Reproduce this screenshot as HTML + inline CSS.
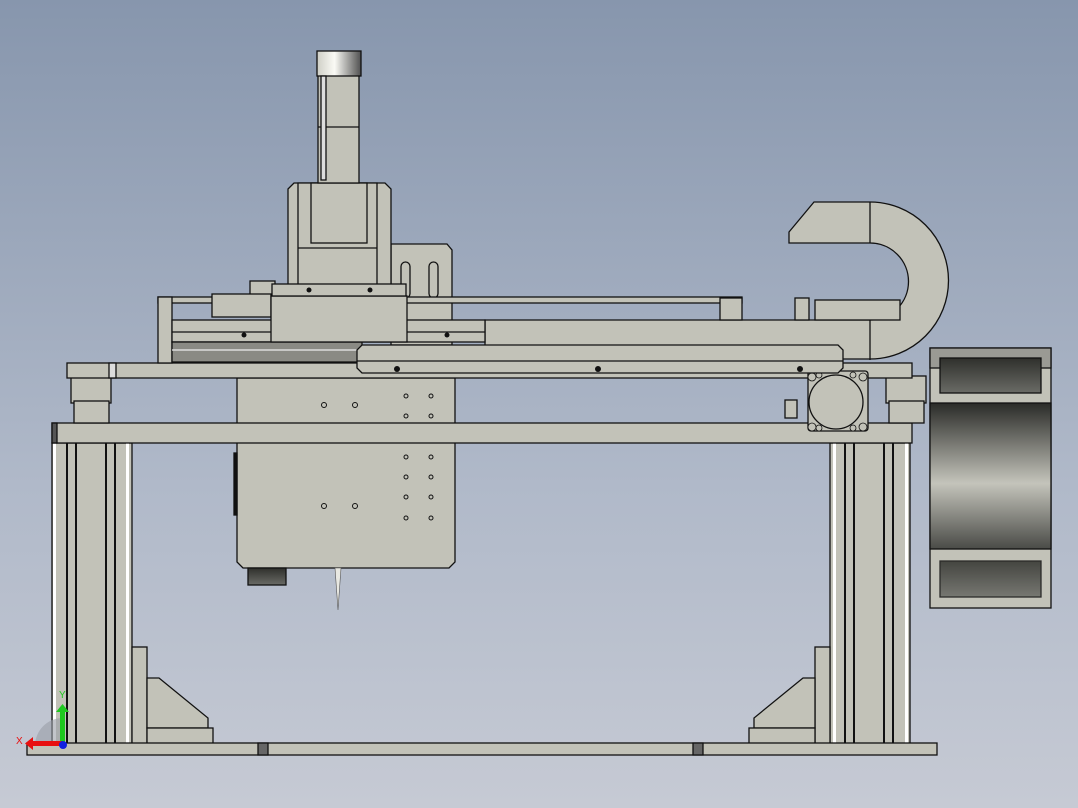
<!DOCTYPE html>
<html><head><style>
html,body{margin:0;padding:0;width:1078px;height:808px;overflow:hidden}
body{background:linear-gradient(#8796ad,#b0b9c9 60%,#c6cad4)}
svg{position:absolute;left:0;top:0}
</style></head><body>
<svg width="1078" height="808" viewBox="0 0 1078 808" xmlns="http://www.w3.org/2000/svg" font-family="Liberation Sans, sans-serif">
<defs>
<linearGradient id="dk" x1="0" y1="0" x2="0" y2="1"><stop offset="0" stop-color="#2f302c"/><stop offset="1" stop-color="#6a6b66"/></linearGradient>
<linearGradient id="mot" x1="0" y1="0" x2="0" y2="1"><stop offset="0" stop-color="#2a2b28"/><stop offset="0.55" stop-color="#c4c4bb"/><stop offset="1" stop-color="#4a4b47"/></linearGradient>
<linearGradient id="cap" x1="0" y1="0" x2="1" y2="0"><stop offset="0" stop-color="#cfcfc6"/><stop offset="0.4" stop-color="#fafaf5"/><stop offset="1" stop-color="#505050"/></linearGradient>
</defs>
<g fill="#c2c2b8" stroke="#111" stroke-width="1.3">
<rect x="52" y="443" width="80" height="302"/>
<rect x="830" y="443" width="80" height="302"/>
<g stroke-width="2">
<line x1="67" y1="443" x2="67" y2="745"/><line x1="76" y1="443" x2="76" y2="745"/><line x1="106" y1="443" x2="106" y2="745"/><line x1="115" y1="443" x2="115" y2="745"/>
<line x1="845" y1="443" x2="845" y2="745"/><line x1="854" y1="443" x2="854" y2="745"/><line x1="884" y1="443" x2="884" y2="745"/><line x1="893" y1="443" x2="893" y2="745"/>
</g>
<rect x="53" y="443" width="3" height="302" fill="#fff" stroke="none"/>
<rect x="126" y="443" width="3" height="302" fill="#fff" stroke="none"/>
<rect x="833" y="443" width="3" height="302" fill="#fff" stroke="none"/>
<rect x="905" y="443" width="3" height="302" fill="#fff" stroke="none"/>
<rect x="132" y="647" width="15" height="98"/>
<path d="M147 678 H159 L208 718 V728 H147 Z"/>
<rect x="147" y="728" width="66" height="17"/>
<rect x="815" y="647" width="15" height="98"/>
<path d="M815 678 H803 L754 718 V728 H815 Z"/>
<rect x="749" y="728" width="66" height="17"/>
<rect x="27" y="743" width="910" height="12"/>
<rect x="258" y="743" width="10" height="12" fill="#666"/>
<rect x="693" y="743" width="10" height="12" fill="#666"/>
<path d="M237 378 H455 V562 L449 568 H243 L237 562 Z"/>
<rect x="234" y="453" width="3" height="62" fill="#111"/>
<rect x="248" y="568" width="38" height="17" fill="url(#dk)"/>
<path d="M335 568 L338 610 L341 568 Z" fill="#e8e8e2" stroke="#555" stroke-width="0.6"/>
<rect x="52" y="423" width="860" height="20"/>
<rect x="52" y="423" width="5" height="20" fill="#555"/>
<rect x="71" y="376" width="40" height="27"/><rect x="74" y="401" width="35" height="22"/>
<rect x="886" y="376" width="40" height="27"/><rect x="889" y="401" width="35" height="22"/>
<rect x="67" y="363" width="845" height="15"/>
<rect x="109" y="363" width="7" height="15" fill="#ddd"/>
<rect x="930" y="348" width="121" height="260" fill="#c2c2b8"/>
<rect x="930" y="348" width="121" height="20" fill="#9a9a94"/>
<rect x="940" y="358" width="101" height="35" fill="url(#dk)"/>
<rect x="930" y="403" width="121" height="146" fill="url(#mot)"/>
<rect x="940" y="561" width="101" height="36" fill="url(#dk)" opacity="0.85"/>
<rect x="808" y="371" width="60" height="60" rx="3"/>
<circle cx="836" cy="402" r="27"/>
<g stroke-width="0.8"><circle cx="812" cy="377" r="4"/><circle cx="863" cy="377" r="4"/><circle cx="812" cy="427" r="4"/><circle cx="863" cy="427" r="4"/><circle cx="819" cy="375" r="3"/><circle cx="853" cy="375" r="3"/><circle cx="853" cy="428" r="3"/><circle cx="819" cy="428" r="3"/></g>
<rect x="785" y="400" width="12" height="18"/>
<path d="M789 232 L814 202 H870 A78 78 0 0 1 870 359 H485 V320 H870 A38 38 0 0 0 870 243 H789 Z"/>
<line x1="870" y1="202" x2="870" y2="243"/><line x1="870" y1="319" x2="870" y2="360"/>
<rect x="815" y="300" width="85" height="20"/>
<rect x="795" y="298" width="14" height="22"/>
<path d="M391 244 H447 L452 250 V345 H391 Z"/>
<rect x="401" y="262" width="9" height="36" rx="4.5"/>
<rect x="429" y="262" width="9" height="36" rx="4.5"/>
<rect x="250" y="281" width="25" height="15"/>
<path d="M288 189 L294 183 H385 L391 189 V296 H288 Z"/>
<path d="M298 183 H377 V290 L372 296 H303 L298 290 Z"/>
<rect x="311" y="183" width="56" height="60"/>
<line x1="298" y1="248" x2="377" y2="248"/>
<rect x="318" y="72" width="41" height="111"/>
<rect x="317" y="51" width="44" height="25" fill="url(#cap)"/>
<line x1="318" y1="127" x2="359" y2="127"/>
<rect x="321" y="76" width="5" height="104" fill="#ddd"/>
<rect x="158" y="297" width="584" height="6"/>
<rect x="158" y="297" width="14" height="66"/>
<rect x="172" y="320" width="313" height="22"/>
<line x1="172" y1="332" x2="485" y2="332"/>
<rect x="172" y="342" width="190" height="20" fill="#8a8a84"/>
<line x1="172" y1="350" x2="362" y2="350" stroke="#eee"/>
<rect x="212" y="294" width="59" height="23"/>
<rect x="271" y="296" width="136" height="46"/>
<rect x="272" y="284" width="134" height="12"/>
<rect x="720" y="298" width="22" height="22"/>
<path d="M362 345 H838 L843 350 V368 L838 373 H362 L357 368 V350 Z"/>
<line x1="357" y1="361" x2="843" y2="361"/>
</g>
<g fill="#111">
<circle cx="397" cy="369" r="3"/><circle cx="598" cy="369" r="3"/><circle cx="800" cy="369" r="3"/>
<circle cx="309" cy="290" r="2.5"/><circle cx="370" cy="290" r="2.5"/>
<circle cx="244" cy="335" r="2.5"/><circle cx="447" cy="335" r="2.5"/>
</g>
<g fill="none" stroke="#111" stroke-width="1">
<circle cx="324" cy="405" r="2.5"/><circle cx="355" cy="405" r="2.5"/>
<circle cx="324" cy="506" r="2.5"/><circle cx="355" cy="506" r="2.5"/>
<circle cx="406" cy="396" r="2"/><circle cx="431" cy="396" r="2"/><circle cx="406" cy="416" r="2"/><circle cx="431" cy="416" r="2"/>
<circle cx="406" cy="457" r="2"/><circle cx="431" cy="457" r="2"/><circle cx="406" cy="477" r="2"/><circle cx="431" cy="477" r="2"/>
<circle cx="406" cy="497" r="2"/><circle cx="431" cy="497" r="2"/><circle cx="406" cy="518" r="2"/><circle cx="431" cy="518" r="2"/>
</g>
<path d="M35 745 A28 28 0 0 1 62 718 V745 Z" fill="#9a9ea6" opacity="0.6"/>
<rect x="60" y="710" width="5" height="34" fill="#1ec81e"/>
<path d="M56 712 L62.5 704 L69 712 Z" fill="#1ec81e"/>
<rect x="30" y="741" width="32" height="5" fill="#e81010"/>
<path d="M33 737 L25 743.5 L33 750 Z" fill="#e81010"/>
<circle cx="63" cy="745" r="4" fill="#1020e0"/>
<text x="59" y="698" font-size="10" fill="#1ec81e">Y</text>
<text x="16" y="744" font-size="10" fill="#e81010">X</text>
</svg>
</body></html>
